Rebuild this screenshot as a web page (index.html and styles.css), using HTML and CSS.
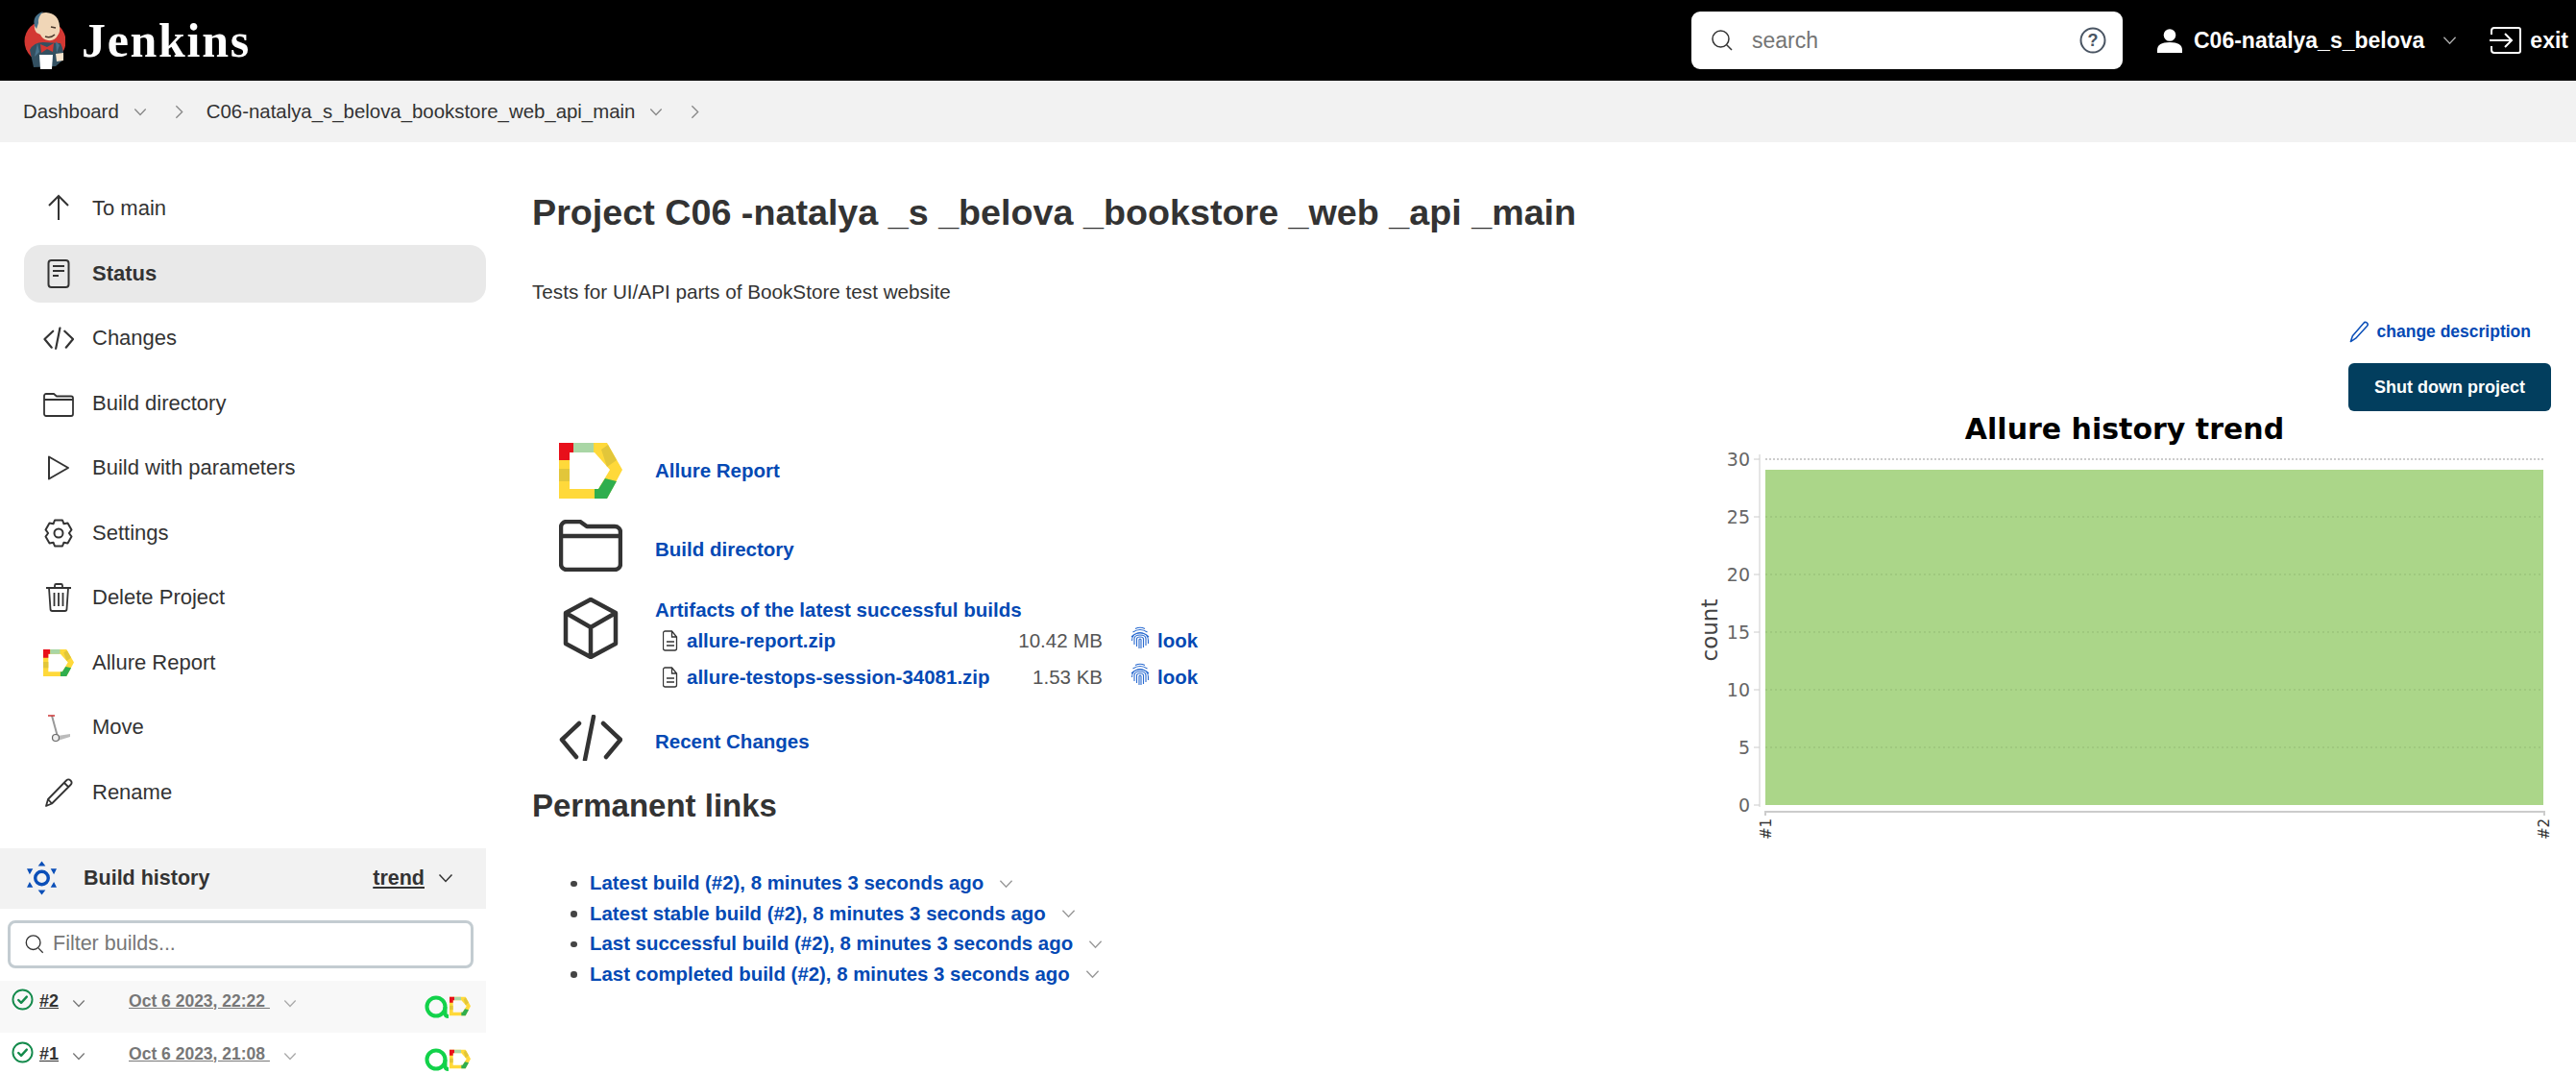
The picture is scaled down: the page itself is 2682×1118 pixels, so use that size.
FILE: index.html
```html
<!DOCTYPE html>
<html lang="en">
<head>
    <meta charset="UTF-8">
    <title>C06-natalya_s_belova_bookstore_web_api_main - Jenkins</title>
    <link rel="stylesheet" href="styles.css">
</head>
<body>
    <!-- shared icons -->
    <svg class="defs" width="0" height="0">
        <symbol id="allure" viewBox="0 0 66 58">
            <path d="M0 0H50L66 28 50 58H0zM11 10V48H41L53 28 37 10z" fill="#ffd93a" fill-rule="evenodd"/>
            <polygon points="0,0 15,0 15,10 11,10 11,18 0,18" fill="#e80f1a"/>
            <rect x="15" y="0" width="21" height="10" fill="#a9d6a5"/>
            <polygon points="44,7 51,2 60,18 50,25" fill="#e2c63a"/>
            <rect x="0" y="27" width="11" height="13" fill="#e2c63a"/>
            <polygon points="37,48 41,48 48,37 60,40 50,58 37,58" fill="#2fae4e"/>
        </symbol>
        <symbol id="folder" viewBox="0 0 66 54">
            <path d="M2 8a6 6 0 0 1 6-6h14l7 5h29a6 6 0 0 1 6 6v33a6 6 0 0 1-6 6H8a6 6 0 0 1-6-6z M2 17h62" fill="none" stroke="currentColor" stroke-width="4.500" stroke-linejoin="round"/>
        </symbol>
        <symbol id="code" viewBox="0 0 66 48">
            <path d="M21 9 3 26l15 18M46 9l18 17-15 18M36 2 27 47" fill="none" stroke="currentColor" stroke-width="4.500" stroke-linecap="round" stroke-linejoin="round"/>
        </symbol>
        <symbol id="chev" viewBox="0 0 16 10">
            <path d="M1.500 1.500 8 8.500l6.500-7" fill="none" stroke="currentColor" stroke-width="1.500"/>
        </symbol>
        <symbol id="chevr" viewBox="0 0 10 16">
            <path d="M1.500 1 8.500 8l-7 7" fill="none" stroke="currentColor" stroke-width="1.500"/>
        </symbol>
        <symbol id="okay" viewBox="0 0 24 24">
            <circle cx="12" cy="12" r="10.500" fill="none" stroke="#138a4b" stroke-width="2"/>
            <path d="M7.500 12.500l3 3 6-6.500" fill="none" stroke="#138a4b" stroke-width="2.500" stroke-linecap="round" stroke-linejoin="round"/>
        </symbol>
        <symbol id="testops" viewBox="0 0 26 24">
            <circle cx="12" cy="12" r="9.500" fill="none" stroke="#12d24a" stroke-width="4"/>
            <path d="M21.500 12v7q0 3 3.500 3" fill="none" stroke="#12d24a" stroke-width="4"/>
        </symbol>
        <symbol id="print" viewBox="0 0 20 24">
            <g fill="none" stroke="#2a6bd0" stroke-width="1.100">
                <path d="M5 2.500q5-2.500 10 0M2.500 6q7.500-5 15 0M1 11q9-9 18 0M1.500 15q0-8 8.500-8t8.500 8v3M4 19v-6q0-4 6-4t6 4v7M6.500 21v-8q0-2 3.500-2t3.500 2v9M9 23v-9q0-1 1-1t1 1v9"/>
            </g>
        </symbol>
        <symbol id="file" viewBox="0 0 16 22">
            <path d="M2.500 1h7l5 6v12a2 2 0 0 1-2 2h-10a2 2 0 0 1-2-2V3a2 2 0 0 1 2-2zM9.500 1v6h5M4 12h8M4 16h8" fill="none" stroke="#333" stroke-width="1.300"/>
        </symbol>
    </svg>

    <header class="topbar">
        <a class="brand">
            <svg class="butler" viewBox="0 0 43 60">
                <circle cx="22" cy="31" r="21.500" fill="#d33833"/>
                <path d="M10 58 6 40q4-8 14-8l18 1q4 8 3 17l-8 7z" fill="#335061"/>
                <path d="M11 13q1-12 12-12 13 1 14 14 1 6-2 10-3 6-10 5-6-1-8-6l-4-2q-3-4-2-9z" fill="#f0d6b7"/>
                <path d="M11 15Q8 4 20 0q-6 6-5 12l-2 6zM14 33l-3 14 5-5zM33 31l1 12 3-8z" fill="#49728b"/>
                <path d="M17 34l7 3 7-4-1 9-6-3-6 4z" fill="#d33833"/>
                <path d="M28 16l5 1M22 26q6 2 10-2" stroke="#49372c" stroke-width="1.500" fill="none"/>
                <path d="M16 45h14l-1 15H17z" fill="#fff"/>
                <path d="M33 44l8-1v8l-7 1z" fill="#f7e4cd"/>
            </svg>
            <span class="brand-name">Jenkins</span>
        </a>
        <div class="search">
            <svg class="search-ico" viewBox="0 0 24 24"><path d="M17 17l5 5M19 10.500a8.500 8.500 0 1 1-17 0 8.500 8.500 0 0 1 17 0z" fill="none" stroke="#333" stroke-width="1.500"/></svg>
            <span class="search-text">search</span>
            <svg class="help-ico" viewBox="0 0 28 28">
                <circle cx="14" cy="14" r="12.500" fill="none" stroke="#4a5563" stroke-width="2"/>
                <text x="14" y="20" text-anchor="middle" class="help-mark">?</text>
            </svg>
        </div>
        <a class="user">
            <svg class="user-ico" viewBox="0 0 26 25"><circle cx="13" cy="6.500" r="6.300" fill="#fff"/><path d="M0 25v-3q0-8 13-8t13 8v3z" fill="#fff"/></svg>
            C06-natalya_s_belova
            <svg class="user-chev"><use href="#chev"/></svg>
        </a>
        <a class="exit">
            <svg class="exit-ico" viewBox="0 0 33 28"><path d="M2 8V4a3 3 0 0 1 3-3h25a2 2 0 0 1 2 2v22a2 2 0 0 1-2 2H5a3 3 0 0 1-3-3v-4M0 14h22M16 7l7 7-7 7" fill="none" stroke="#fff" stroke-width="2"/></svg>
            exit
        </a>
    </header>

    <nav class="crumbs">
        <span>Dashboard</span>
        <svg class="crumb-down"><use href="#chev"/></svg>
        <svg class="crumb-sep"><use href="#chevr"/></svg>
        <span>C06-natalya_s_belova_bookstore_web_api_main</span>
        <svg class="crumb-down"><use href="#chev"/></svg>
        <svg class="crumb-sep"><use href="#chevr"/></svg>
    </nav>

    <div class="page">
        <aside class="side">
            <ul class="tasks">
                <li class="task">
                    <svg class="task-ico" viewBox="0 0 32 32"><path d="M16 28V4M6 13l10-10 10 10" fill="none" stroke="#333" stroke-width="2"/></svg>
                    To main
                </li>
                <li class="task task-on">
                    <svg class="task-ico" viewBox="0 0 32 32"><rect x="5.500" y="2" width="21" height="28" rx="3" fill="none" stroke="#333" stroke-width="2"/><path d="M10 8h12M10 13h12M10 18h6" stroke="#333" stroke-width="2"/></svg>
                    Status
                </li>
                <li class="task">
                    <svg class="task-ico" viewBox="0 0 66 48"><use href="#code"/></svg>
                    Changes
                </li>
                <li class="task">
                    <svg class="task-ico" viewBox="0 0 32 32"><path d="M1 8a2 2 0 0 1 2-2h8l3 2.500h15a2 2 0 0 1 2 2V27a2 2 0 0 1-2 2H3a2 2 0 0 1-2-2zM1 12h30" fill="none" stroke="#333" stroke-width="1.800"/></svg>
                    Build directory
                </li>
                <li class="task">
                    <svg class="task-ico" viewBox="0 0 32 32"><path d="M6 4.500 26 16 6 27.500z" fill="none" stroke="#333" stroke-width="2" stroke-linejoin="round"/></svg>
                    Build with parameters
                </li>
                <li class="task">
                    <svg class="task-ico" viewBox="0 0 32 32"><circle cx="16" cy="16" r="4.500" fill="none" stroke="#333" stroke-width="2"/><path d="M12 2.500h8l1.500 3.800 4-.7 4 6.800-2.600 3.600 2.600 3.600-4 6.800-4-.7L20 29.500h-8l-1.500-3.800-4 .7-4-6.800L5.100 16 2.500 12.400l4-6.800 4 .7z" fill="none" stroke="#333" stroke-width="2" stroke-linejoin="round"/></svg>
                    Settings
                </li>
                <li class="task">
                    <svg class="task-ico" viewBox="0 0 32 32"><path d="M3 6h26M12 6V3.500a1.500 1.500 0 0 1 1.500-1.500h5A1.500 1.500 0 0 1 20 3.500V6M6 6l1.500 22a2 2 0 0 0 2 2h13a2 2 0 0 0 2-2L26 6M11.500 11v14M16 11v14M20.500 11v14" fill="none" stroke="#333" stroke-width="1.800"/></svg>
                    Delete Project
                </li>
                <li class="task">
                    <svg class="task-ico"><use href="#allure"/></svg>
                    Allure Report
                </li>
                <li class="task">
                    <svg class="task-ico" viewBox="0 0 32 32"><path d="M9 4l6 22" stroke="#999" stroke-width="2"/><path d="M5 4h7" stroke="#c33" stroke-width="1.500"/><path d="M15 25l13-2 0 3-13 4z" fill="#bbb"/><circle cx="13" cy="27" r="3.500" fill="#eee" stroke="#666" stroke-width="1.200"/></svg>
                    Move
                </li>
                <li class="task">
                    <svg class="task-ico" viewBox="0 0 32 32"><path d="M3 30l2-7L24 3.500a3 3 0 0 1 4.500 4.500L9 27.500zM5 23l4 4.500M22 6l4.500 4.500" fill="none" stroke="#333" stroke-width="1.800" stroke-linejoin="round"/></svg>
                    Rename
                </li>
            </ul>

            <section class="history">
                <div class="history-head">
                    <svg class="history-ico" viewBox="0 0 32 36">
                        <circle cx="16" cy="18" r="7" fill="none" stroke="#0b4fb8" stroke-width="3.500"/>
                        <path d="M16 0l4 5h-8zM16 36l-4-5h8zM0 8h6.500L3 14zM32 8h-6.500L29 14zM0 28h6.500L3 22zM32 28h-6.500L29 22z" fill="#0b4fb8"/>
                    </svg>
                    <span class="history-title">Build history</span>
                    <span class="trend">trend</span>
                    <svg class="trend-chev"><use href="#chev"/></svg>
                </div>
                <div class="filter">
                    <svg class="filter-ico" viewBox="0 0 24 24"><path d="M16.500 16.500l5 5M18.500 10a8 8 0 1 1-16 0 8 8 0 0 1 16 0z" fill="none" stroke="#333" stroke-width="1.500"/></svg>
                    Filter builds...
                </div>
                <div class="build build-odd">
                    <svg class="build-ok"><use href="#okay"/></svg>
                    <span class="build-no">#2</span>
                    <svg class="build-chev"><use href="#chev"/></svg>
                    <span class="build-date">Oct 6 2023, 22:22&nbsp;</span>
                    <svg class="date-chev"><use href="#chev"/></svg>
                    <svg class="build-testops"><use href="#testops"/></svg>
                    <svg class="build-allure"><use href="#allure"/></svg>
                </div>
                <div class="build">
                    <svg class="build-ok"><use href="#okay"/></svg>
                    <span class="build-no">#1</span>
                    <svg class="build-chev"><use href="#chev"/></svg>
                    <span class="build-date">Oct 6 2023, 21:08&nbsp;</span>
                    <svg class="date-chev"><use href="#chev"/></svg>
                    <svg class="build-testops"><use href="#testops"/></svg>
                    <svg class="build-allure"><use href="#allure"/></svg>
                </div>
            </section>
        </aside>

        <main class="main">
            <h1 class="title">Project C06 -natalya _s _belova _bookstore _web _api _main</h1>
            <p class="desc">Tests for UI/API parts of BookStore test website</p>
            <div class="desc-edit">
                <a class="edit-link">
                    <svg class="edit-ico" viewBox="0 0 22 24"><path d="M1.500 22.500l2-6L15.500 2.500a2.500 2.500 0 0 1 4 3L7 19z" fill="none" stroke="#0b4fb8" stroke-width="1.600" stroke-linejoin="round"/></svg>
                    change description
                </a>
            </div>

            <div class="columns">
                <div class="links">
                    <div class="link-row row-allure">
                        <svg class="link-ico"><use href="#allure"/></svg>
                        <a class="link">Allure Report</a>
                    </div>
                    <div class="link-row row-folder">
                        <svg class="link-ico"><use href="#folder"/></svg>
                        <a class="link link-low">Build directory</a>
                    </div>
                    <div class="link-row row-artifacts">
                        <svg class="cube" viewBox="0 0 60 64"><path d="M30 2 56 16v32L30 62 4 48V16zM4 16l26 15 26-15M30 31v31" fill="none" stroke="#333" stroke-width="4.500" stroke-linejoin="round"/></svg>
                        <div class="artifacts">
                            <a class="link artifacts-title">Artifacts of the latest successful builds</a>
                            <div class="file-row">
                                <svg class="file-ico"><use href="#file"/></svg>
                                <a class="link">allure-report.zip</a>
                                <span class="file-size">10.42 MB</span>
                                <a class="link look"><svg class="print-ico"><use href="#print"/></svg>look</a>
                            </div>
                            <div class="file-row">
                                <svg class="file-ico"><use href="#file"/></svg>
                                <a class="link">allure-testops-session-34081.zip</a>
                                <span class="file-size">1.53 KB</span>
                                <a class="link look"><svg class="print-ico"><use href="#print"/></svg>look</a>
                            </div>
                        </div>
                    </div>
                    <div class="link-row row-changes">
                        <svg class="link-ico"><use href="#code"/></svg>
                        <a class="link link-low">Recent Changes</a>
                    </div>

                    <h2 class="perma-title">Permanent links</h2>
                    <ul class="perma">
                        <li><a class="link">Latest build (#2), 8 minutes 3 seconds ago</a><svg class="perma-chev"><use href="#chev"/></svg></li>
                        <li><a class="link">Latest stable build (#2), 8 minutes 3 seconds ago</a><svg class="perma-chev"><use href="#chev"/></svg></li>
                        <li><a class="link">Last successful build (#2), 8 minutes 3 seconds ago</a><svg class="perma-chev"><use href="#chev"/></svg></li>
                        <li><a class="link">Last completed build (#2), 8 minutes 3 seconds ago</a><svg class="perma-chev"><use href="#chev"/></svg></li>
                    </ul>
                </div>

                <div class="trend-col">
                    <button class="shutdown">Shut down project</button>
                    <svg class="chart" viewBox="0 0 906 470">
                        <g transform="translate(10 12)">
                            <text x="442" y="24" text-anchor="middle" class="chart-title">Allure history trend</text>
                            <text transform="translate(18 223) rotate(-90)" text-anchor="middle" class="chart-axis">count</text>
                            <rect x="68" y="56" width="810" height="349" fill="#abd689"/>
                            <path d="M68 45H878" stroke="#999" stroke-dasharray="2 2"/>
                            <path d="M68 105H878M68 165H878M68 225H878M68 285H878M68 345H878" stroke="#93bb75" stroke-dasharray="2 3"/>
                            <path d="M62 40V407M56 45h6M56 105h6M56 165h6M56 225h6M56 285h6M56 345h6M56 405h6" stroke="#ccc" fill="none"/>
                            <path d="M68 416V412H879V416" stroke="#ccc" stroke-width="2" fill="none"/>
                            <g class="chart-tick" text-anchor="end">
                                <text x="52" y="52">30</text>
                                <text x="52" y="112">25</text>
                                <text x="52" y="172">20</text>
                                <text x="52" y="232">15</text>
                                <text x="52" y="292">10</text>
                                <text x="52" y="352">5</text>
                                <text x="52" y="412">0</text>
                            </g>
                            <text transform="translate(74 441) rotate(-90)" class="chart-label">#1</text>
                            <text transform="translate(884 441) rotate(-90)" class="chart-label">#2</text>
                        </g>
                    </svg>
                </div>
            </div>
        </main>
    </div>
</body>
</html>
```

FILE: styles.css
```css
* {
    box-sizing: border-box;
}
html, body {
    height: 1118px;
    overflow: hidden;
}
body {
    margin: 0;
    background-color: #fff;
    color: #333;
    font-family: "Liberation Sans", Arial, sans-serif;
    font-size: 20.5px;
}
ul {
    margin: 0;
    padding: 0;
    list-style: none;
}
.defs {
    position: absolute;
}

/* top bar */
.topbar {
    display: flex;
    align-items: center;
    height: 84px;
    background-color: #000;
    color: #fff;
    font-weight: bold;
    font-size: 23px;
}
.brand {
    display: flex;
    align-items: center;
    margin-left: 25px;
    margin-right: auto;
}
.butler {
    width: 43px;
    height: 60px;
}
.brand-name {
    margin-left: 17px;
    font-family: "Liberation Serif", serif;
    font-size: 50px;
    letter-spacing: 1.7px;
}
.search {
    display: flex;
    align-items: center;
    width: 449px;
    height: 60px;
    padding: 0 17px 0 20px;
    background-color: #fff;
    border-radius: 9px;
}
.search-ico {
    width: 24px;
    height: 24px;
}
.search-text {
    flex: 1;
    margin-left: 19px;
    color: #757575;
    font-weight: normal;
    font-size: 23px;
}
.help-ico {
    width: 28px;
    height: 28px;
}
.help-mark {
    fill: #4a5563;
    font-size: 18px;
    font-weight: bold;
}
.user {
    display: flex;
    align-items: center;
    margin-left: 36px;
}
.user-ico {
    width: 26px;
    height: 25px;
    margin-right: 12px;
}
.user-chev {
    width: 15px;
    height: 10px;
    margin-left: 19px;
    color: #aaa;
}
.exit {
    display: flex;
    align-items: center;
    margin-left: 34px;
    margin-right: 8px;
}
.exit-ico {
    width: 33px;
    height: 28px;
    margin-right: 9px;
}

/* breadcrumbs */
.crumbs {
    display: flex;
    align-items: center;
    height: 64px;
    padding-left: 24px;
    background-color: #f2f2f2;
    font-size: 20.4px;
}
.crumb-down {
    width: 14px;
    height: 9px;
    margin-left: 15px;
    color: #888;
}
.crumb-sep {
    width: 9px;
    height: 15px;
    margin: 0 24px 0 29px;
    color: #888;
}

/* side panel */
.page {
    display: flex;
}
.side {
    flex: none;
    width: 506px;
}
.tasks {
    display: flex;
    flex-direction: column;
    gap: 7.5px;
    margin: 39px 0 28px 25px;
}
.task {
    display: flex;
    align-items: center;
    height: 60px;
    padding-left: 20px;
    border-radius: 17px;
    font-size: 22px;
}
.task-on {
    background-color: #e9e9e9;
    font-weight: bold;
}
.task-ico {
    flex: none;
    width: 32px;
    height: 32px;
    margin-right: 19px;
}
.history-head {
    display: flex;
    align-items: center;
    height: 63px;
    padding-left: 28px;
    background-color: #f2f2f2;
    font-weight: bold;
    font-size: 21.500px;
}
.history-ico {
    width: 31px;
    height: 36px;
}
.history-title {
    margin-left: 28px;
    margin-right: auto;
}
.trend {
    text-decoration: underline;
    margin-right: -3px;
}
.trend-chev {
    width: 16px;
    height: 10px;
    margin: 0 34px 0 17px;
}
.filter {
    display: flex;
    align-items: center;
    width: 485px;
    height: 50px;
    margin: 12px 0 13px 8px;
    padding-left: 14px;
    border: 3px solid #c3ccd1;
    border-radius: 8px;
    color: #777;
    font-size: 21.500px;
}
.filter-ico {
    width: 22px;
    height: 22px;
    margin-right: 8px;
}
.build {
    display: flex;
    align-items: flex-start;
    height: 54px;
    margin-bottom: 1px;
    padding: 8px 16px 0 12px;
    font-size: 18px;
}
.build-odd {
    background-color: #f8f8f8;
}
.build-ok {
    flex: none;
    width: 23px;
    height: 23px;
}
.build-no {
    margin-left: 6px;
    font-weight: bold;
    text-decoration: underline;
    line-height: 27px;
}
.build-chev {
    width: 14px;
    height: 9px;
    margin: 11px 0 0 14px;
    color: #777;
}
.build-date {
    margin-left: 45px;
    color: #777;
    font-size: 17.5px;
    font-weight: bold;
    text-decoration: underline;
    line-height: 27px;
}
.date-chev {
    width: 14px;
    height: 9px;
    margin: 11px auto 0 14px;
    color: #aaa;
}
.build-testops {
    width: 26px;
    height: 24px;
    margin-top: 7px;
}
.build-allure {
    width: 22px;
    height: 21px;
    margin-top: 8px;
}

/* main column */
.main {
    flex: 1;
    min-width: 0;
    padding: 51px 26px 0 48px;
}
.title {
    margin: 0;
    font-size: 37.7px;
    line-height: 44px;
}
.desc {
    margin: 47px 0 0;
    font-size: 20.7px;
    line-height: 28px;
}
.desc-edit {
    display: flex;
    justify-content: flex-end;
    margin-top: 13px;
    padding-right: 21px;
    height: 28px;
}
.edit-link {
    display: flex;
    align-items: center;
    color: #0349b4;
    font-weight: bold;
    font-size: 17.500px;
}
.edit-ico {
    width: 21px;
    height: 23px;
    margin-right: 8px;
}
.columns {
    display: flex;
    justify-content: space-between;
    margin-top: 19px;
}
.links {
    width: 700px;
    padding: 83px 0 0 28px;
}
.link {
    color: #0349b4;
    font-weight: bold;
}
.link-low {
    padding-top: 8px;
}
.link-row {
    display: flex;
    align-items: center;
    gap: 34px;
}
.link-ico {
    flex: none;
    width: 66px;
    height: 100%;
}
.row-allure {
    height: 58px;
}
.row-folder {
    height: 54px;
    margin-top: 22px;
}
.row-artifacts {
    align-items: flex-start;
    margin-top: 27px;
}
.row-changes {
    height: 48px;
    margin-top: 20px;
}
.cube {
    flex: none;
    width: 60px;
    height: 64px;
    margin: 0 3px;
}
.artifacts-title {
    display: block;
    line-height: 26px;
}
.file-row {
    display: grid;
    grid-template-columns: 25px 433px auto auto;
    align-items: center;
    height: 38px;
    margin-left: 8px;
}
.file-ico {
    width: 16px;
    height: 22px;
}
.file-size {
    color: #555;
    text-align: right;
    white-space: nowrap;
    margin-left: -200px;
}
.look {
    display: flex;
    align-items: center;
    margin-left: 29px;
}
.print-ico {
    width: 20px;
    height: 24px;
    margin: -6px 8px 0 0;
}
.perma-title {
    margin: 27px 0 45px -28px;
    font-size: 33px;
    line-height: 40px;
}
.perma li {
    position: relative;
    display: flex;
    align-items: center;
    height: 31.500px;
    margin-left: 32px;
    font-size: 20.4px;
}
.perma li::before {
    content: "";
    position: absolute;
    left: -20px;
    width: 6.5px;
    height: 6.5px;
    border-radius: 50%;
    background-color: #444;
}
.perma-chev {
    width: 15px;
    height: 10px;
    margin-left: 16px;
    color: #999;
}
.trend-col {
    display: flex;
    flex-direction: column;
    align-items: flex-end;
}
.shutdown {
    width: 211px;
    height: 50px;
    padding: 0;
    border: none;
    border-radius: 6px;
    background-color: #023e5e;
    color: #fff;
    font-family: inherit;
    font-weight: bold;
    font-size: 18px;
}
.chart {
    width: 906px;
    height: 470px;
    margin: -7.500px -10px 0 0;
    font-family: "DejaVu Sans", sans-serif;
}
.chart-title {
    font-size: 30px;
    font-weight: bold;
    fill: #000;
}
.chart-axis {
    font-size: 23px;
    fill: #444;
}
.chart-tick {
    font-size: 19px;
    fill: #666;
}
.chart-label {
    font-size: 15px;
    fill: #333;
}
```
